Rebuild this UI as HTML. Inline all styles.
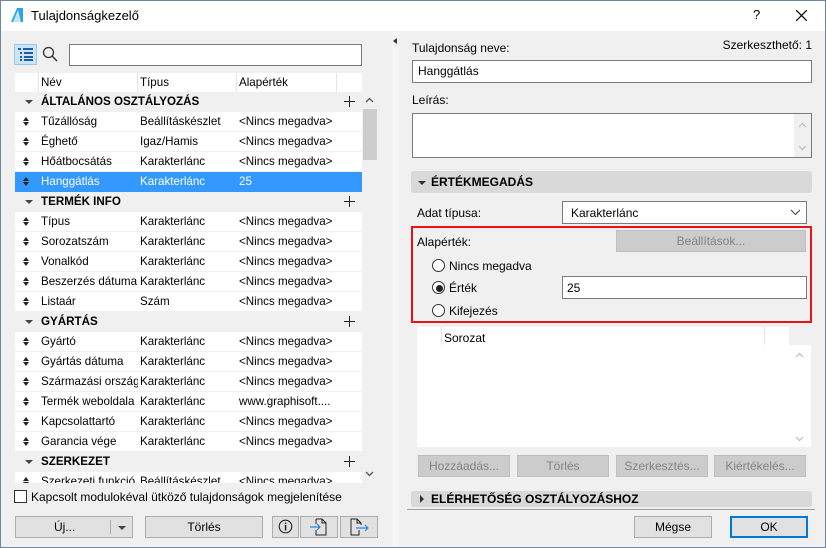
<!DOCTYPE html>
<html><head><meta charset="utf-8"><style>
*{box-sizing:border-box;margin:0;padding:0}
body{width:826px;height:548px;overflow:hidden;background:#f0f0f0;font-family:"Liberation Sans",sans-serif;font-size:12px;color:#000;position:relative}
.a{position:absolute;white-space:nowrap}
.win{position:absolute;left:0;top:0;width:826px;height:548px;border:1px solid #6d87a3;}
.title{position:absolute;left:1px;top:1px;width:824px;height:30px;background:#fff}
.inp{position:absolute;background:#fff;border:1px solid #7a7a7a}
.btn{position:absolute;background:#e1e1e1;border:1px solid #adadad;text-align:center;line-height:20px}
.dis{background:#cccccc;border-color:#bfbfbf;color:#838383}
.row{position:absolute;left:15px;width:347px;height:19px;background:#fff;line-height:19px;font-size:11.6px}
.grp{position:absolute;left:15px;width:347px;height:19px;background:#f0f0f0;line-height:19px;font-weight:bold;font-size:11.6px}
.row span,.grp span{position:absolute;top:0;overflow:hidden}
.c1{left:26px;width:97px}.c2{left:125px;width:97px}.c3{left:224px;width:110px}
.arr{position:absolute;left:8px;top:5px;width:7px;height:10px}
.arr:before{content:"";position:absolute;left:0;top:0;border-left:3.5px solid transparent;border-right:3.5px solid transparent;border-bottom:4px solid #222}
.arr:after{content:"";position:absolute;left:0;top:5px;border-left:3.5px solid transparent;border-right:3.5px solid transparent;border-top:4px solid #222}
.tri{position:absolute;left:10px;top:8px;width:0;height:0;border-left:4px solid transparent;border-right:4px solid transparent;border-top:4px solid #444}
.plus{position:absolute;left:329px;top:4px;width:11px;height:11px}
.plus:before{content:"";position:absolute;left:5px;top:0;width:1px;height:11px;background:#222}
.plus:after{content:"";position:absolute;left:0;top:5px;width:11px;height:1px;background:#222}
.sec{position:absolute;left:411px;width:401px;background:#d9d9d9;border-radius:3px;font-weight:bold;line-height:22px;padding-left:20px}
.rad{position:absolute;width:13px;height:13px;border:1px solid #333;border-radius:50%;background:#fff}
</style></head><body>
<div class="win"></div>
<div class="title"></div>
<svg class="a" style="left:9px;top:7px" width="16" height="16"><path d="M2 15 L8 1 L14 1 L14 15 Z" fill="#2aa6de"/><path d="M9 3 L12 15 L4 15 Z" fill="#fff" opacity=".7"/></svg>
<div class="a" style="left:31px;top:8px;font-size:13px">Tulajdonságkezelő</div>
<div class="a" style="left:753px;top:7px;font-size:13px">?</div>
<svg class="a" style="left:796px;top:10px" width="11" height="11"><path d="M0 0L11 11M11 0L0 11" stroke="#000" stroke-width="1.2"/></svg>

<div class="a" style="left:14px;top:44px;width:23px;height:21px;background:#cce4f7;border:1px solid #99c9ef"></div>
<svg class="a" style="left:18px;top:48px" width="16" height="13"><g fill="#1f5f9e"><rect x="0" y="0" width="3" height="2"/><rect x="5" y="0" width="10" height="2"/><rect x="2" y="4" width="2" height="2"/><rect x="6" y="4" width="9" height="2"/><rect x="2" y="8" width="2" height="2"/><rect x="6" y="8" width="9" height="2"/><rect x="2" y="11" width="2" height="2"/><rect x="6" y="11" width="9" height="2"/></g></svg>
<svg class="a" style="left:42px;top:46px" width="16" height="16"><circle cx="6.5" cy="6.5" r="5" fill="none" stroke="#333" stroke-width="1.3"/><path d="M10 10L15 15" stroke="#333" stroke-width="1.5"/></svg>
<div class="inp" style="left:69px;top:44px;width:293px;height:22px"></div>

<div class="a" style="left:15px;top:73px;width:347px;height:19px;background:#fff"></div>
<div class="a" style="left:38px;top:73px;width:1px;height:19px;background:#e5e5e5"></div>
<div class="a" style="left:137px;top:73px;width:1px;height:19px;background:#e5e5e5"></div>
<div class="a" style="left:236px;top:73px;width:1px;height:19px;background:#e5e5e5"></div>
<div class="a" style="left:336px;top:73px;width:1px;height:19px;background:#e5e5e5"></div>
<div class="a" style="left:41px;top:76px;font-size:11.6px">Név</div>
<div class="a" style="left:140px;top:76px;font-size:11.6px">Típus</div>
<div class="a" style="left:239px;top:76px;font-size:11.6px">Alapérték</div>

<div class="a" style="left:15px;top:92px;width:347px;height:391px;overflow:hidden">
<div style="position:relative;left:-15px;top:-92px">
<div class="grp" style="top:92px"><i class="tri"></i><span class="c1" style="width:200px">ÁLTALÁNOS OSZTÁLYOZÁS</span><b class="plus"></b></div>
<div class="row" style="top:112px"><i class="arr"></i><span class="c1">Tűzállóság</span><span class="c2">Beállításkészlet</span><span class="c3">&lt;Nincs megadva&gt;</span></div>
<div class="row" style="top:132px"><i class="arr"></i><span class="c1">Éghető</span><span class="c2">Igaz/Hamis</span><span class="c3">&lt;Nincs megadva&gt;</span></div>
<div class="row" style="top:152px"><i class="arr"></i><span class="c1">Hőátbocsátás</span><span class="c2">Karakterlánc</span><span class="c3">&lt;Nincs megadva&gt;</span></div>
<div class="row" style="top:172px;background:#3399ff;color:#fff;height:20px"><i class="arr"></i><span class="c1">Hanggátlás</span><span class="c2">Karakterlánc</span><span class="c3">25</span></div>
<div class="grp" style="top:192px"><i class="tri"></i><span class="c1" style="width:200px">TERMÉK INFO</span><b class="plus"></b></div>
<div class="row" style="top:212px"><i class="arr"></i><span class="c1">Típus</span><span class="c2">Karakterlánc</span><span class="c3">&lt;Nincs megadva&gt;</span></div>
<div class="row" style="top:232px"><i class="arr"></i><span class="c1">Sorozatszám</span><span class="c2">Karakterlánc</span><span class="c3">&lt;Nincs megadva&gt;</span></div>
<div class="row" style="top:252px"><i class="arr"></i><span class="c1">Vonalkód</span><span class="c2">Karakterlánc</span><span class="c3">&lt;Nincs megadva&gt;</span></div>
<div class="row" style="top:272px"><i class="arr"></i><span class="c1">Beszerzés dátuma</span><span class="c2">Karakterlánc</span><span class="c3">&lt;Nincs megadva&gt;</span></div>
<div class="row" style="top:292px"><i class="arr"></i><span class="c1">Listaár</span><span class="c2">Szám</span><span class="c3">&lt;Nincs megadva&gt;</span></div>
<div class="grp" style="top:312px"><i class="tri"></i><span class="c1" style="width:200px">GYÁRTÁS</span><b class="plus"></b></div>
<div class="row" style="top:332px"><i class="arr"></i><span class="c1">Gyártó</span><span class="c2">Karakterlánc</span><span class="c3">&lt;Nincs megadva&gt;</span></div>
<div class="row" style="top:352px"><i class="arr"></i><span class="c1">Gyártás dátuma</span><span class="c2">Karakterlánc</span><span class="c3">&lt;Nincs megadva&gt;</span></div>
<div class="row" style="top:372px"><i class="arr"></i><span class="c1">Származási ország</span><span class="c2">Karakterlánc</span><span class="c3">&lt;Nincs megadva&gt;</span></div>
<div class="row" style="top:392px"><i class="arr"></i><span class="c1">Termék weboldala</span><span class="c2">Karakterlánc</span><span class="c3">www.graphisoft....</span></div>
<div class="row" style="top:412px"><i class="arr"></i><span class="c1">Kapcsolattartó</span><span class="c2">Karakterlánc</span><span class="c3">&lt;Nincs megadva&gt;</span></div>
<div class="row" style="top:432px"><i class="arr"></i><span class="c1">Garancia vége</span><span class="c2">Karakterlánc</span><span class="c3">&lt;Nincs megadva&gt;</span></div>
<div class="grp" style="top:452px"><i class="tri"></i><span class="c1" style="width:200px">SZERKEZET</span><b class="plus"></b></div>
<div class="row" style="top:472px"><i class="arr"></i><span class="c1">Szerkezeti funkció</span><span class="c2">Beállításkészlet</span><span class="c3">&lt;Nincs megadva&gt;</span></div>
</div></div>
<div class="a" style="left:362px;top:92px;width:16px;height:391px;background:#f0f0f0"></div>
<div class="a" style="left:363px;top:109px;width:14px;height:51px;background:#cdcdcd"></div>
<svg class="a" style="left:365px;top:97px" width="9" height="6"><path d="M1 5L4.5 1.5L8 5" fill="none" stroke="#555" stroke-width="1.3"/></svg>
<svg class="a" style="left:365px;top:471px" width="9" height="6"><path d="M1 1L4.5 4.5L8 1" fill="none" stroke="#555" stroke-width="1.3"/></svg>

<div class="a" style="left:14px;top:490px;width:13px;height:13px;border:1px solid #333;background:#fff"></div>
<div class="a" style="left:31px;top:490px">Kapcsolt modulokéval ütköző tulajdonságok megjelenítése</div>

<div class="btn" style="left:15px;top:516px;width:118px;height:22px"><span style="position:absolute;left:38px">Új...</span></div>
<div class="a" style="left:110px;top:520px;width:1px;height:14px;background:#adadad"></div>
<div class="a" style="left:118px;top:526px;width:0;height:0;border-left:4px solid transparent;border-right:4px solid transparent;border-top:4px solid #444"></div>
<div class="btn" style="left:145px;top:516px;width:118px;height:22px">Törlés</div>
<div class="btn" style="left:272px;top:516px;width:27px;height:22px"></div>
<svg class="a" style="left:278px;top:519px" width="15" height="15"><circle cx="7.5" cy="7.5" r="6.3" fill="none" stroke="#222" stroke-width="1.1"/><rect x="6.8" y="6" width="1.5" height="5.5" fill="#222"/><rect x="6.8" y="3.5" width="1.5" height="1.5" fill="#222"/></svg>
<div class="btn" style="left:300px;top:516px;width:38px;height:22px"></div>
<svg class="a" style="left:309px;top:518px" width="20" height="18"><path d="M7 1H13L17 5V17H7V12M7 6V1M13 1V5H17" fill="none" stroke="#222"/><path d="M1 9H11M8 6L11 9L8 12" fill="none" stroke="#2e86de" stroke-width="1.2"/></svg>
<div class="btn" style="left:340px;top:516px;width:38px;height:22px"></div>
<svg class="a" style="left:349px;top:518px" width="22" height="18"><path d="M10 12V17H2V1H8L12 5V7M8 1V5H12" fill="none" stroke="#222"/><path d="M7 10H19M16 7L19 10L16 13" fill="none" stroke="#2e86de" stroke-width="1.2"/></svg>

<div class="a" style="left:392px;top:32px;width:7px;height:515px;background:#f5f5f5"></div>
<div class="a" style="left:393px;top:38px;width:0;height:0;border-top:3px solid transparent;border-bottom:3px solid transparent;border-right:4px solid #333"></div>

<div class="a" style="left:412px;top:41px">Tulajdonság neve:</div>
<div class="a" style="right:14px;top:38px">Szerkeszthető: 1</div>
<div class="inp" style="left:412px;top:60px;width:400px;height:23px;padding:3px 5px">Hanggátlás</div>
<div class="a" style="left:412px;top:93px">Leírás:</div>
<div class="inp" style="left:412px;top:113px;width:400px;height:45px"></div>
<div class="a" style="left:794px;top:114px;width:17px;height:43px;background:#f0f0f0"></div>
<svg class="a" style="left:798px;top:122px" width="9" height="6"><path d="M1 5L4.5 1.5L8 5" fill="none" stroke="#bbb" stroke-width="1.2"/></svg>
<svg class="a" style="left:798px;top:145px" width="9" height="6"><path d="M1 1L4.5 4.5L8 1" fill="none" stroke="#bbb" stroke-width="1.2"/></svg>

<div class="sec" style="top:171px;height:22px">ÉRTÉKMEGADÁS</div>
<div class="a" style="left:418px;top:181px;width:0;height:0;border-left:4px solid transparent;border-right:4px solid transparent;border-top:4px solid #333"></div>

<div class="a" style="left:417px;top:206px">Adat típusa:</div>
<div class="inp" style="left:562px;top:201px;width:245px;height:23px;padding:4px 8px">Karakterlánc</div>
<svg class="a" style="left:790px;top:209px" width="11" height="7"><path d="M1 1L5.5 5.5L10 1" fill="none" stroke="#444" stroke-width="1.1"/></svg>

<div class="a" style="left:411px;top:226px;width:401px;height:97px;border:2px solid #e8141b"></div>
<div class="a" style="left:417px;top:235px">Alapérték:</div>
<div class="btn dis" style="left:616px;top:230px;width:190px;height:22px">Beállítások...</div>
<div class="rad" style="left:432px;top:259px"></div>
<div class="a" style="left:449px;top:259px">Nincs megadva</div>
<div class="rad" style="left:432px;top:281px"></div>
<div class="a" style="left:436px;top:285px;width:7px;height:7px;border-radius:50%;background:#222"></div>
<div class="a" style="left:449px;top:281px">Érték</div>
<div class="inp" style="left:562px;top:276px;width:245px;height:23px;padding:4px 4px">25</div>
<div class="rad" style="left:432px;top:304px"></div>
<div class="a" style="left:449px;top:304px">Kifejezés</div>

<div class="a" style="left:417px;top:327px;width:394px;height:120px;background:#fff"></div>
<div class="a" style="left:441px;top:327px;width:1px;height:18px;background:#e5e5e5"></div>
<div class="a" style="left:764px;top:327px;width:1px;height:18px;background:#e5e5e5"></div>
<div class="a" style="left:444px;top:331px">Sorozat</div>
<div class="a" style="left:791px;top:345px;width:20px;height:102px;background:#fff"></div>
<div class="a" style="left:789px;top:327px;width:22px;height:18px;background:#f0f0f0"></div>
<svg class="a" style="left:795px;top:352px" width="9" height="6"><path d="M1 5L4.5 1.5L8 5" fill="none" stroke="#bbb" stroke-width="1.2"/></svg>
<svg class="a" style="left:795px;top:436px" width="9" height="6"><path d="M1 1L4.5 4.5L8 1" fill="none" stroke="#bbb" stroke-width="1.2"/></svg>

<div class="btn dis" style="left:418px;top:455px;width:92px;height:22px">Hozzáadás...</div>
<div class="btn dis" style="left:517px;top:455px;width:92px;height:22px">Törlés</div>
<div class="btn dis" style="left:616px;top:455px;width:92px;height:22px">Szerkesztés...</div>
<div class="btn dis" style="left:714px;top:455px;width:92px;height:22px">Kiértékelés...</div>

<div class="sec" style="top:491px;height:16px;line-height:16px;padding-left:20px">ELÉRHETŐSÉG OSZTÁLYOZÁSHOZ</div>
<div class="a" style="left:420px;top:495px;width:0;height:0;border-top:4px solid transparent;border-bottom:4px solid transparent;border-left:4px solid #333"></div>
<div class="a" style="left:407px;top:509px;width:408px;height:1px;background:#a0a0a0"></div>

<div class="btn" style="left:634px;top:516px;width:78px;height:22px">Mégse</div>
<div class="btn" style="left:730px;top:516px;width:78px;height:22px;border:2px solid #0078d7;line-height:18px">OK</div>
</body></html>
